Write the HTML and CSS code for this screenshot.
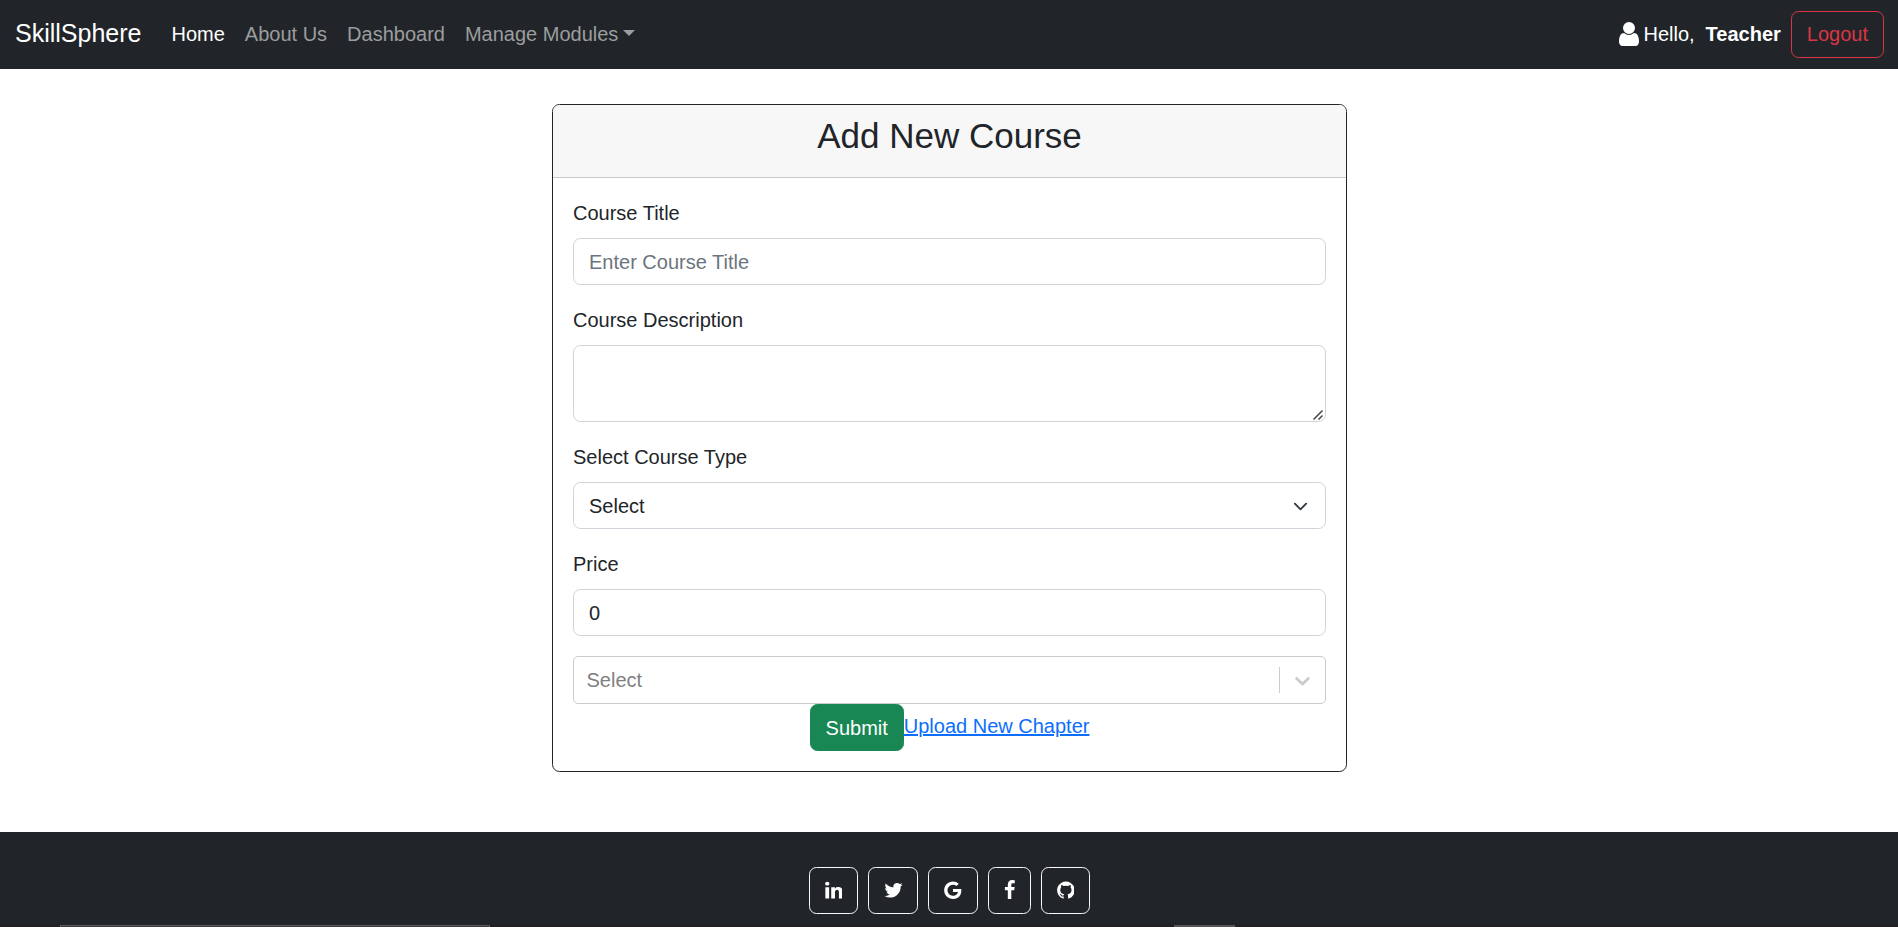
FILE: index.html
```html
<!DOCTYPE html>
<html lang="en">
<head>
<meta charset="utf-8">
<title>SkillSphere</title>
<link rel="stylesheet" href="styles.css">
</head>
<body>
<nav class="navbar">
  <a class="brand" href="#">SkillSphere</a>
  <div class="nav-links">
    <a class="nav-link active" href="#">Home</a>
    <a class="nav-link" href="#">About Us</a>
    <a class="nav-link" href="#">Dashboard</a>
    <a class="nav-link toggle" href="#">Manage Modules</a>
  </div>
  <div class="account">
    <svg class="user-icon" viewBox="256 128 1280 1536"><path d="M1536 1399q0 109-62.5 187t-150.5 78h-854q-88 0-150.5-78t-62.5-187q0-85 8.5-160.5t31.5-152 58.5-131 94-89 134.5-34.5q131 128 313 128t313-128q76 0 134.5 34.5t94 89 58.5 131 31.5 152 8.5 160.5zm-256-887q0 159-112.5 271.5t-271.5 112.5-271.5-112.5-112.5-271.5 112.5-271.5 271.5-112.5 271.5 112.5 112.5 271.5z"/></svg>
    <span class="hello">Hello,</span>
    <strong class="role">Teacher</strong>
    <button class="btn btn-logout" type="button">Logout</button>
  </div>
</nav>

<main class="main">
  <section class="card">
    <header class="card-header"><h3 class="card-title">Add New Course</h3></header>
    <form class="card-body">
      <div class="field">
        <label class="label" for="title">Course Title</label>
        <input class="control" id="title" type="text" placeholder="Enter Course Title">
      </div>
      <div class="field">
        <label class="label" for="desc">Course Description</label>
        <div class="textarea-wrap">
          <textarea class="control textarea" id="desc"></textarea>
          <svg class="grip" viewBox="0 0 10 10"><path d="M0.5 9.5L9.5 0.5M5.5 9.5L9.5 5.5"/></svg>
        </div>
      </div>
      <div class="field">
        <label class="label" for="type">Select Course Type</label>
        <div class="control select" id="type">
          <span>Select</span>
          <svg class="select-arrow" viewBox="0 0 16 16"><path d="m2 5 6 6 6-6"/></svg>
        </div>
      </div>
      <div class="field">
        <label class="label" for="price">Price</label>
        <input class="control" id="price" type="text" value="0">
      </div>
      <div class="combo">
        <span class="combo-text">Select</span>
        <span class="combo-separator"></span>
        <span class="combo-indicator">
          <svg class="combo-arrow" viewBox="0 0 20 20"><path d="M4.516 7.548c0.436-0.446 1.043-0.481 1.576 0l3.908 3.747 3.908-3.747c0.533-0.481 1.141-0.446 1.574 0 0.436 0.445 0.408 1.197 0 1.615-0.406 0.418-4.695 4.502-4.695 4.502-0.217 0.223-0.502 0.335-0.787 0.335s-0.57-0.112-0.789-0.335c0 0-4.287-4.084-4.695-4.502s-0.436-1.17 0-1.615z"/></svg>
        </span>
      </div>
      <div class="actions">
        <button class="btn btn-submit" type="button">Submit</button>
        <a class="chapter-link" href="#">Upload New Chapter</a>
      </div>
    </form>
  </section>
</main>

<footer class="footer">
  <div class="socials">
    <a class="btn social" href="#"><svg class="w-normal" viewBox="124 0 1540 1792"><path d="M477 625v991h-330v-991h330zm21-306q1 73-50.5 122t-135.5 49h-2q-82 0-132-49t-50-122q0-74 51.5-122.5t134.5-48.5 133 48.5 51 122.5zm1166 729v568h-329v-530q0-105-40.5-164.5t-126.5-59.5q-63 0-105.5 34.5t-63.5 85.5q-11 30-11 81v553h-329q2-399 2-647t-1-296l-1-48h329v144h-2q20-32 41-56t56.5-52 87-43.5 114.5-15.5q171 0 275 113.5t104 332.5z"/></svg></a>
    <a class="btn social social-wide" href="#"><svg class="w-wide" viewBox="64 0 1664 1792"><path d="M1684 408q-67 98-162 167 1 14 1 42 0 130-38 259.5t-115.5 248.5-184.5 210.5-258 146-323 54.5q-271 0-496-145 35 4 78 4 225 0 401-138-105-2-188-64.5t-114-159.5q33 5 61 5 43 0 85-11-112-23-185.5-111.5t-73.5-205.5v-4q68 38 146 41-66-44-105-115t-39-154q0-88 44-163 121 149 294.5 238.5t371.5 99.5q-8-38-8-74 0-134 94.5-228.5t228.5-94.5q140 0 236 102 109-21 205-78-37 115-142 178 93-10 186-50z"/></svg></a>
    <a class="btn social social-wide" href="#"><svg class="w-google" viewBox="128 0 1510 1792"><path d="M896 786h725q12 67 12 128 0 217-91 387.5t-259.5 266.5-386.5 96q-157 0-299-60.5t-245-163.5-163.5-245-60.5-299 60.5-299 163.5-245 245-163.5 299-60.5q300 0 515 201l-209 201q-123-119-306-119-129 0-238.5 65t-173.5 176.5-64 243.5 64 243.5 173.5 176.5 238.5 65q87 0 160-24t120-60 82-82 51.5-87 22.5-78h-436v-264z"/></svg></a>
    <a class="btn social social-narrow" href="#"><svg class="w-narrow" viewBox="400 0 1024 1792"><path d="M1343 12v264h-157q-86 0-116 36t-30 108v189h293l-39 296h-254v759h-306v-759h-255v-296h255v-218q0-186 104-288.5t277-102.5q147 0 228 12z"/></svg></a>
    <a class="btn social" href="#"><svg class="w-normal" viewBox="128 0 1536 1792"><path d="M896 128q209 0 385.5 103t279.5 279.5 103 385.5q0 251-146.5 451.5t-378.5 277.5q-27 5-40-7t-13-30q0-3 .5-76.5t.5-134.5q0-97-52-142 57-6 102.5-18t94-39 81-66.5 53-105 20.5-150.5q0-119-79-206 37-91-8-204-28-9-81 11t-92 44l-38 24q-93-26-192-26t-192 26q-16-11-42.5-27t-83.5-38.5-85-13.5q-45 113-8 204-79 87-79 206 0 85 20.5 150t52.5 105 80.5 67 94 39 102.5 18q-39 36-49 103-21 10-45 15t-57 5-65.5-21.5-55.5-62.5q-19-32-48.5-52t-49.5-24l-20-3q-21 0-29 4.5t-5 11.5 9 14 13 12l7 5q22 10 43.5 38t31.5 51l10 23q13 38 44 61.5t67 30 69.5 7 55.5-3.5l23-4q0 38 .5 88.5t.5 54.5q0 18-13 30t-40 7q-232-77-378.5-277.5t-146.5-451.5q0-209 103-385.5t279.5-279.5 385.5-103z"/></svg></a>
  </div>
  <div class="edge">
    <span class="edge-search"></span>
    <span class="edge-app"></span>
  </div>
</footer>
</body>
</html>
```
FILE: styles.css
```css
*,
*::before,
*::after {
  box-sizing: border-box;
}

body {
  margin: 0;
  height: 100vh;
  display: flex;
  flex-direction: column;
  overflow: hidden;
  background: #fff;
  color: #212529;
  font: 20px/1.5 "Liberation Sans", Arial, sans-serif;
}

a {
  text-decoration: none;
}

.navbar {
  height: 69px;
  flex: none;
  display: flex;
  align-items: center;
  padding: 0 14px 0 15px;
  background: #212529;
}

.brand {
  margin-right: 20px;
  padding-bottom: 1px;
  font-size: 25px;
  color: #fff;
}

.nav-links {
  display: flex;
  flex: 1;
  padding-bottom: 2px;
}

.nav-link {
  padding: 0 10px;
  color: #9b9d9e;
}

.nav-link.active {
  color: #fff;
}

.toggle::after {
  content: "";
  display: inline-block;
  margin-left: 5px;
  vertical-align: 5px;
  border-top: 6px solid;
  border-right: 6px solid transparent;
  border-left: 6px solid transparent;
}

.account {
  display: flex;
  align-items: center;
  color: #fff;
}

.user-icon {
  width: 20px;
  height: 24px;
  margin-bottom: 1px;
  fill: #fff;
}

.hello {
  margin: 0 11px 0 4px;
  padding-bottom: 2px;
}

.role {
  margin-right: 10px;
  padding-bottom: 2px;
}

.btn {
  height: 47px;
  display: flex;
  align-items: center;
  justify-content: center;
  padding: 0 15px;
  border: 1px solid;
  border-radius: 7.5px;
  background: transparent;
  font: inherit;
}

.btn-logout {
  padding-bottom: 2px;
  color: #dc3545;
}

.main {
  height: 763px;
  flex: none;
  display: flex;
  justify-content: center;
  align-items: flex-start;
  padding: 35px 0 0 1px;
}

.card {
  width: 795px;
  border: 1px solid #212529;
  border-radius: 7.5px;
}

.card-header {
  padding: 10px 20px 20px;
  border-radius: 6.5px 6.5px 0 0;
  background: #f7f7f7;
  border-bottom: 1px solid #c8c9ca;
}

.card-title {
  margin: 0;
  font-size: 35px;
  font-weight: 400;
  line-height: 42px;
  text-align: center;
}

.card-body {
  padding: 20px;
}

.field {
  margin-bottom: 20px;
}

.label {
  display: block;
  margin-bottom: 10px;
}

.control {
  display: block;
  width: 100%;
  height: 47px;
  padding: 1px 15px 0;
  border: 1px solid #ced4da;
  border-radius: 7.5px;
  background: #fff;
  color: #212529;
  font: inherit;
  outline: none;
}

.control::placeholder {
  color: #6c757d;
  opacity: 1;
}

.textarea-wrap {
  position: relative;
}

.textarea {
  height: 77px;
  resize: none;
}

.grip {
  position: absolute;
  right: 3px;
  bottom: 2px;
  width: 10px;
  height: 10px;
  fill: none;
  stroke: #444;
  stroke-width: 1.5;
}

.select {
  display: flex;
  align-items: center;
  justify-content: space-between;
}

.select-arrow {
  width: 15px;
  height: 15px;
  margin-right: 2.5px;
  fill: none;
  stroke: #343a40;
  stroke-width: 2;
  stroke-linecap: round;
  stroke-linejoin: round;
}

.combo {
  height: 48px;
  display: flex;
  align-items: center;
  border: 1px solid #ccc;
  border-radius: 5px;
}

.combo-text {
  flex: 1;
  padding-left: 12.5px;
  color: #808080;
}

.combo-separator {
  width: 1px;
  height: 26px;
  background: #ccc;
}

.combo-indicator {
  display: flex;
  padding: 10px;
}

.combo-arrow {
  width: 25px;
  height: 25px;
  fill: #ccc;
}

.actions {
  display: flex;
  justify-content: center;
}

.btn-submit {
  border-color: #198754;
  background: #198754;
  color: #fff;
}

.chapter-link {
  padding-top: 7px;
  color: #0d6efd;
  text-decoration: underline;
}

.footer {
  height: 95px;
  flex: none;
  display: flex;
  flex-direction: column;
  justify-content: space-between;
  padding-top: 35px;
  background: #212529;
}

.socials {
  display: flex;
  justify-content: center;
  gap: 10px;
  padding-left: 1px;
}

.social {
  width: 49px;
  padding: 0 0 1px;
  color: #f8f9fa;
}

.social-wide {
  width: 50px;
}

.social-narrow {
  width: 43px;
}

.social svg {
  height: 20.5px;
  fill: #fff;
}

.w-normal {
  width: 17.8px;
}

.w-wide {
  width: 19px;
}

.w-google {
  width: 17.6px;
}

.w-narrow {
  width: 11.7px;
}

.edge {
  height: 2px;
  display: flex;
  background: #202020;
}

.edge-search {
  width: 430px;
  margin: 0 684px 0 60px;
  border: 1px solid #5a5a5a;
  border-bottom: 0;
  background: #3a3a3a;
}

.edge-app {
  width: 61px;
  background: #555;
}
```
